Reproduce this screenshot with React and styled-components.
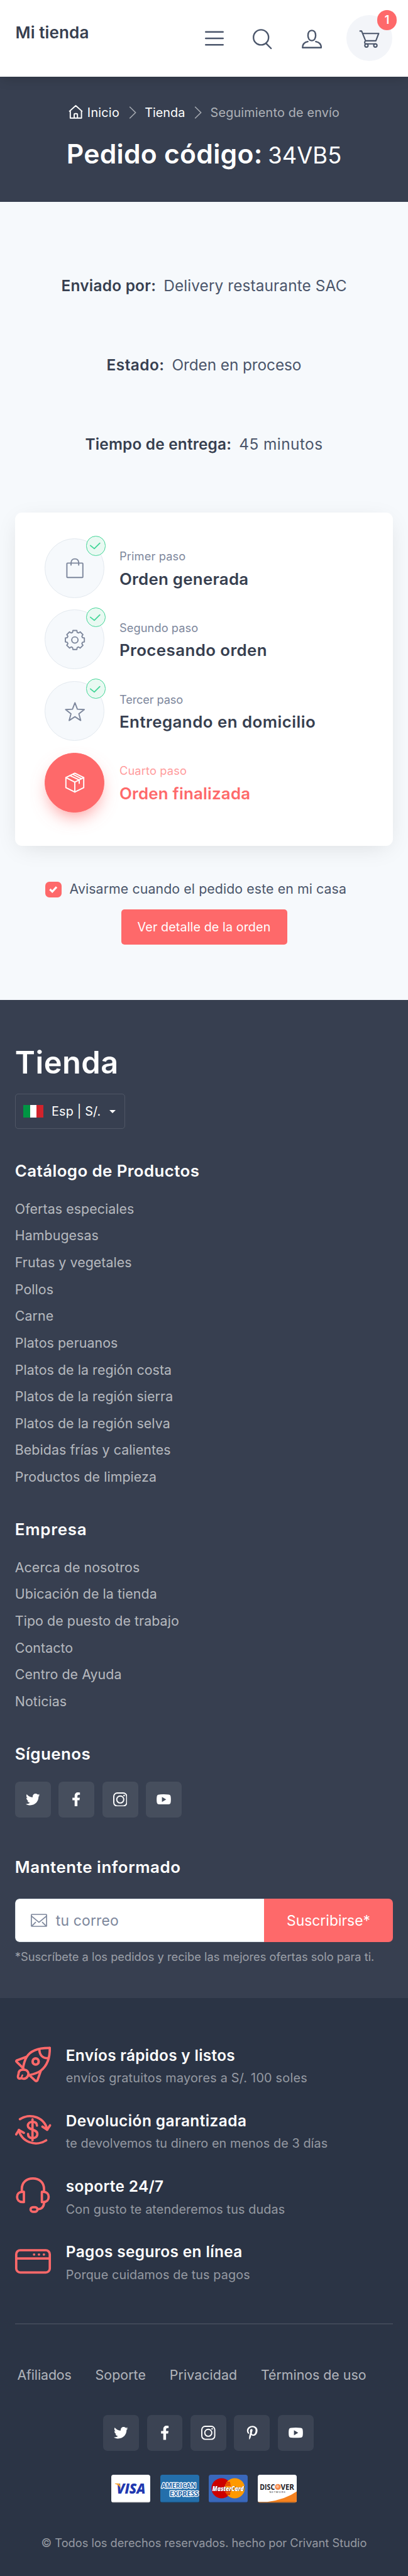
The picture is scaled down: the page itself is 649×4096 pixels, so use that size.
import React from "react";
import styled, { createGlobalStyle, css } from "styled-components";
import { FaTwitter, FaFacebookF, FaPinterestP } from "react-icons/fa";

const color = {
  primary: "#fe696a",
  dark: "#373f50",
  darker: "#2b3445",
  body: "#4b566b",
  muted: "#7d879c",
  light: "#f6f9fc",
  green: "#42d697",
};

const GlobalStyle = createGlobalStyle`
  *, *::before, *::after { box-sizing: border-box; }
  body {
    margin: 0;
    font-family: Inter, Roboto, sans-serif;
    color: ${color.body};
    background: ${color.light};
    -webkit-font-smoothing: antialiased;
  }
  svg { display: block; flex: none; }
`;

const text = css`
  font-size: ${(p) => (p.$size * 0.965).toFixed(2)}px;
  line-height: ${(p) => p.$line}px;
  letter-spacing: ${(p) => p.$track ?? 0.004}em;
  white-space: nowrap;
`;

const Page = styled.div`
  width: 649px;
  height: 4096px;
  overflow: hidden;
  display: flex;
  flex-direction: column;
`;

/* ---------- Header ---------- */

const Header = styled.header`
  height: 121.6px;
  padding: 0 25.2px 0 24.6px;
  display: flex;
  justify-content: space-between;
  background: #fff;
  position: relative;
  box-shadow: 0 5px 18px -2px rgba(0, 0, 0, 0.16);
`;

const Brand = styled.a`
  ${text}
  margin-top: 32px;
  font-weight: 600;
  color: ${color.dark};
`;

const Tools = styled.nav`
  display: flex;
  align-items: center;
`;

const Tool = styled.svg`
  width: ${(p) => p.$width}px;
  height: 40px;
  margin-right: ${(p) => p.$after}px;
  fill: none;
  stroke: ${color.body};
  stroke-width: 2.4;
  stroke-linecap: round;
  stroke-linejoin: round;
`;

const CartButton = styled.a`
  position: relative;
  width: 72.8px;
  height: 72.8px;
  border-radius: 50%;
  background: #f3f5f9;
  display: flex;
  align-items: center;
  justify-content: center;
`;

const CartCount = styled.span`
  position: absolute;
  top: -8px;
  right: -7.6px;
  width: 31.6px;
  height: 31.6px;
  border-radius: 50%;
  background: ${color.primary};
  color: #fff;
  font-size: 18px;
  font-weight: 600;
  line-height: 32px;
  text-align: center;
`;

/* ---------- Title band ---------- */

const Hero = styled.section`
  height: 199.9px;
  padding-top: 42.8px;
  display: flex;
  flex-direction: column;
  align-items: center;
  background: ${color.dark};
  color: #fff;
`;

const Breadcrumb = styled.nav`
  display: flex;
  align-items: center;
  height: 30px;
`;

const Crumb = styled.a`
  ${text}
  color: ${(p) => (p.$current ? "rgba(255,255,255,.6)" : "#fff")};
`;

const Chevron = styled.svg`
  width: 12px;
  height: 20px;
  margin: 0 13.6px 0 14.6px;
  fill: none;
  stroke: rgba(255, 255, 255, 0.55);
  stroke-width: 1.6;
`;

const HomeIcon = styled.svg`
  width: 23px;
  height: 22px;
  margin: -2px 7px 0 0;
  fill: none;
  stroke: #fff;
  stroke-width: 1.9;
  stroke-linejoin: round;
`;

const Title = styled.h1`
  margin: 23.7px 0 0;
  display: flex;
  align-items: baseline;
  gap: 8.6px;
  ${text}
  font-weight: 600;
`;

const OrderCode = styled.span`
  font-size: 36.3px;
  letter-spacing: 0.002em;
  font-weight: 400;
`;

/* ---------- Order status ---------- */

const Main = styled.main`
  height: 1268.7px;
  padding: 113.1px 23.8px 0;
  background: ${color.light};
`;

const Fact = styled.div`
  height: 126.4px;
  display: flex;
  justify-content: center;
  gap: 12px;
  ${text}
`;

const FactLabel = styled.strong`
  font-weight: 600;
  color: ${color.dark};
  letter-spacing: ${(p) => p.$track}em;
`;

const Card = styled.section`
  margin-top: 1px;
  height: 530.5px;
  padding: 41px 47.4px;
  border-radius: 11px;
  background: #fff;
  box-shadow: 0 7.6px 38px -9.5px rgba(0, 0, 0, 0.13);
`;

const Step = styled.div`
  height: 94.8px;
  margin-bottom: 18.9px;
  display: flex;
  gap: 24px;
`;

const StepMark = styled.div`
  position: relative;
  flex: none;
  width: 94.8px;
  height: 94.8px;
  border-radius: 50%;
  display: flex;
  align-items: center;
  justify-content: center;
  border: 1.6px solid ${(p) => (p.$active ? color.primary : "#e3e9ef")};
  background: ${(p) => (p.$active ? color.primary : color.light)};
  box-shadow: ${(p) => (p.$active ? "0 12.6px 28px -8px rgba(254,105,106,.75)" : "none")};
  color: ${(p) => (p.$active ? "#fff" : color.muted)};
`;

const StepIcon = styled.svg`
  width: 34px;
  height: 34px;
  fill: none;
  stroke: currentColor;
  stroke-width: 1.9;
  stroke-linejoin: round;
  stroke-linecap: round;
`;

const DoneBadge = styled.span`
  position: absolute;
  top: -4.8px;
  left: 64.6px;
  width: 31.6px;
  height: 31.6px;
  border-radius: 50%;
  border: 1.6px solid ${color.green};
  background: #e9f9f2;
  svg {
    margin: -1.6px;
    fill: none;
    stroke: ${color.green};
    stroke-width: 1.8;
    stroke-linecap: round;
    stroke-linejoin: round;
  }
`;

const StepBody = styled.div`
  padding-top: 14.4px;
  display: flex;
  flex-direction: column;
  gap: 4.5px;
`;

const StepCount = styled.span`
  ${text}
  color: ${(p) => (p.$active ? "#ff9c9d" : color.muted)};
`;

const StepTitle = styled.h2`
  margin: 0;
  ${text}
  font-weight: 600;
  color: ${(p) => (p.$active ? color.primary : color.dark)};
`;

const Notify = styled.label`
  margin: 56.8px 0 0 48.6px;
  height: 25.3px;
  display: flex;
  align-items: center;
  gap: 12.8px;
`;

const CheckBox = styled.span`
  flex: none;
  width: 25.4px;
  height: 25.4px;
  border-radius: 6.5px;
  background: ${color.primary};
  svg {
    fill: none;
    stroke: #fff;
    stroke-width: 3.2;
  }
`;

const NotifyText = styled.span`
  ${text}
  padding-bottom: 1.6px;
`;

const DetailButton = styled.button`
  display: block;
  margin: 18.6px auto 0;
  width: 264px;
  height: 55.8px;
  padding: 0;
  border: 0;
  border-radius: 5px;
  background: ${color.primary};
  color: #fff;
  font-family: inherit;
  ${text}
`;

/* ---------- Footer ---------- */

const FooterTop = styled.footer`
  height: 1586.4px;
  padding: 69.4px 23.8px 0;
  background: ${color.dark};
  color: #fff;
`;

const FooterBrand = styled.div`
  ${text}
  font-weight: 600;
`;

const Locale = styled.button`
  margin: 19.2px 0 0;
  width: 175px;
  height: 56.5px;
  padding: 0 12.6px;
  display: flex;
  align-items: center;
  border: 1.6px solid rgba(255, 255, 255, 0.12);
  border-radius: 5px;
  background: transparent;
  color: #fff;
  font-family: inherit;
`;

const LocaleText = styled.span`
  ${text}
  margin: 0 13.5px 0 12.6px;
`;

const Flag = styled.span`
  width: 32px;
  height: 20.6px;
  display: flex;
  background: linear-gradient(90deg, #009543 33.3%, #fff 33.3% 66.6%, #d2232c 66.6%);
`;

const Caret = styled.span`
  border: 5.2px solid transparent;
  border-top-color: #fff;
  border-bottom: 0;
`;

const FooterTitle = styled.h3`
  margin: ${(p) => p.$top ?? 44.1}px 0 0;
  ${text}
  font-weight: 600;
`;

const LinkList = styled.ul`
  margin: 20.9px 0 0;
  padding: 0;
  list-style: none;
`;

const LinkItem = styled.li`
  ${text}
  color: rgba(255, 255, 255, 0.65);
`;

const SocialRow = styled.div`
  display: flex;
  gap: 12.7px;
  justify-content: ${(p) => (p.$center ? "center" : "flex-start")};
  margin: ${(p) => p.$margin};
`;

const SocialButton = styled.a`
  width: 56.8px;
  height: 56.8px;
  border-radius: 7px;
  display: flex;
  align-items: center;
  justify-content: center;
  background: rgba(255, 255, 255, 0.08);
  color: #fff;
`;

const Subscribe = styled.form`
  margin-top: 32.2px;
  width: 601.4px;
  height: 69.5px;
  display: flex;
  border-radius: 7px;
  overflow: hidden;
`;

const EmailField = styled.div`
  width: 396px;
  padding-left: 24px;
  display: flex;
  align-items: center;
  gap: 14px;
  border: 1.6px solid #dae1e7;
  border-right: 0;
  border-radius: 7px 0 0 7px;
  background: #fff;
  color: ${color.muted};
  ${text}
  svg {
    fill: none;
    stroke: ${color.muted};
    stroke-width: 1.7;
    stroke-linejoin: round;
  }
`;

const SubscribeButton = styled.button`
  flex: 1;
  padding: 0;
  border: 0;
  background: ${color.primary};
  color: #fff;
  font-family: inherit;
  ${text}
`;

const Hint = styled.p`
  margin: 9px 0 0;
  ${text}
  color: rgba(255, 255, 255, 0.5);
`;

const FooterBottom = styled.footer`
  flex: 1;
  padding: 74px 23.8px 0;
  background: ${color.darker};
  color: #fff;
`;

const Perk = styled.div`
  height: 104.2px;
  display: flex;
  gap: 24px;
`;

const PerkIcon = styled.svg`
  width: 57px;
  height: 57px;
  margin-top: 3.4px;
  overflow: visible;
  fill: none;
  stroke: ${color.primary};
  stroke-width: 3.7;
  stroke-linecap: round;
  stroke-linejoin: round;
`;

const PerkTitle = styled.h4`
  margin: 0 0 4.6px;
  ${text}
  font-weight: 600;
`;

const PerkText = styled.div`
  ${text}
  color: rgba(255, 255, 255, 0.5);
`;

const Rule = styled.hr`
  margin: 27px 0 0;
  border: 0;
  height: 1.6px;
  background: rgba(255, 255, 255, 0.1);
`;

const PolicyLinks = styled.nav`
  margin: 64px 0 0 3.6px;
  display: flex;
  gap: 37.8px;
`;

const PolicyLink = styled.a`
  ${text}
  color: rgba(255, 255, 255, 0.65);
`;

const Payments = styled.div`
  margin-top: 38px;
  display: flex;
  justify-content: center;
  gap: 15.8px;
`;

const PaymentCard = styled.svg`
  width: 62px;
  height: 44.4px;
  overflow: visible;
`;

const Copyright = styled.div`
  margin-top: 50px;
  text-align: center;
  ${text}
  color: rgba(255, 255, 255, 0.5);
`;

/* ---------- Drawings ---------- */

const polar = (cx, cy, r, a) =>
  `${(cx + r * Math.sin(a)).toFixed(2)} ${(cy - r * Math.cos(a)).toFixed(2)}`;

const starPoints = Array.from({ length: 10 }, (_, i) =>
  polar(17.2, 19, i % 2 ? 6.6 : 15.6, (i * Math.PI) / 5)
).join(" ");

const gearPoints = Array.from({ length: 8 }, (_, i) => {
  const a = (i * Math.PI) / 4;
  return [
    [12.6, -0.3],
    [15.4, -0.2],
    [15.4, 0.2],
    [12.6, 0.3],
  ]
    .map(([r, d]) => polar(17.1, 17.6, r, a + d))
    .join(" ");
}).join(" ");

const stepIcons = {
  bag: (
    <>
      <rect x="4.4" y="9.4" width="25.4" height="22.8" rx="1" />
      <path d="M11 12.6V9.5C11 4.8 13.4 2.6 17.1 2.6S23.2 4.8 23.2 9.5V12.6" />
    </>
  ),
  gear: (
    <>
      <polygon points={gearPoints} />
      <circle cx="17.1" cy="17.6" r="5" />
    </>
  ),
  star: <polygon points={starPoints} />,
  box: (
    <>
      <path d="M17 2.4L31.2 9.4V25.4L17 32.4L2.8 25.4V9.4Z" />
      <path d="M2.8 9.4L17 16.6L31.2 9.4M17 16.6V32.4" />
      <path d="M9.2 6.2L24 13.2V18.6M13.6 4.2L27.6 11.2" />
    </>
  ),
};

const perkIcons = {
  rocket: (
    <>
      <path d="M55.2 2.3C38 2 24.5 6 18.2 17C15.5 21.5 14 27 12.8 33.5" />
      <path d="M55.2 2.3C55.5 19 50.5 31 41 38.4C36 42.4 29 44.2 22.5 45.5" />
      <path d="M38.6 4C38.5 14 44 19 53 18.6" />
      <circle cx="32.7" cy="23.9" r="4.8" strokeWidth="4" />
      <path d="M18 16.4L2.4 22.2Q1.4 23.2 2.4 24.3L13 34.6M40.6 39.6L35.4 54.2Q34 55.6 32.4 54.6L22 45.1" />
      <path d="M13 36.9C20 36.9 23 42 20 47.5C18 51 14 52 9.6 50.6C5 52.2 3.4 49.6 5.4 44C5.4 39 8.5 36.9 13 36.9Z" />
      <path d="M11.6 45.8L10 49.5" strokeWidth="2.6" />
    </>
  ),
  refund: (
    <>
      <path d="M7.6 11.6A27.5 25 0 0 1 51 28.4" />
      <path d="M43.4 23.4L51 28.4L55.6 21.4" />
      <path d="M6 28.7A27.5 25 0 0 0 49.5 45.2" />
      <path d="M1.8 35.8L6 28.9L14 33.4" />
      <path d="M27.7 11.8V45.2" />
      <path d="M34.8 21.8C34.8 17.6 31.8 15.8 27.7 15.8S20.3 18 20.3 22C20.3 29.4 35.4 27 35.4 35C35.4 39.5 32 41.7 27.7 41.7S20.6 39.4 20.6 35" />
    </>
  ),
  headset: (
    <>
      <path d="M10.7 21.5V18.6C10.7 8.5 18 1.9 28.3 1.9S46 8.5 46 18.6V21.5" />
      <path d="M14 23.2V39.4H11.6C6.4 39.4 3.2 36.2 3.2 31.3S6.4 23.2 11.6 23.2Z" />
      <path d="M42.6 23.2V39.4H45C50.2 39.4 53.4 36.2 53.4 31.3S50.2 23.2 45 23.2Z" />
      <path d="M46 41C45.6 47 42 50.6 36 50.8" />
      <rect x="24.6" y="47.6" width="11" height="7.2" rx="3.6" />
    </>
  ),
  browser: (
    <>
      <rect x="1.8" y="11" width="53.4" height="35.4" rx="6.4" />
      <path d="M2 24.2H55" strokeLinecap="butt" />
      <g fill={color.primary} stroke="none">
        <circle cx="30.2" cy="17.8" r="1.9" />
        <circle cx="38" cy="17.8" r="1.9" />
        <circle cx="45.8" cy="17.8" r="1.9" />
      </g>
    </>
  ),
};

const Instagram = () => (
  <svg width="22.6" height="22.6" viewBox="0 0 22.6 22.6" fill="none" stroke="#fff" strokeWidth="1.9">
    <rect x="1" y="1" width="20.6" height="20.6" rx="5.4" />
    <circle cx="11.3" cy="11.3" r="5.6" />
    <circle cx="17.4" cy="5" r="1.3" fill="#fff" stroke="none" />
  </svg>
);

const YouTube = () => (
  <svg width="23" height="16.4" viewBox="0 0 23 16.4" fill="#fff">
    <path
      fillRule="evenodd"
      d="M4 .4Q11.5-.3 19 .4Q22 .6 22.5 3.4Q23.2 8.2 22.5 13Q22 15.8 19 16Q11.5 16.7 4 16Q1 15.8.5 13Q-.2 8.2.5 3.4Q1 .6 4 .4ZM8.6 4.2V12.2L15.4 8.2Z"
    />
  </svg>
);

const socialIcons = {
  twitter: <FaTwitter size={22.6} />,
  facebook: <FaFacebookF size={22.4} />,
  instagram: <Instagram />,
  pinterest: <FaPinterestP size={22.4} />,
  youtube: <YouTube />,
};

const CardFace = ({ fill, label, art, children }) => (
  <PaymentCard viewBox="0 0 62 44.4" role="img" aria-label={label}>
    <clipPath id={`clip-${label}`}>
      <rect width="62" height="44.4" rx="3.6" />
    </clipPath>
    <g clipPath={`url(#clip-${label})`}>
      <rect width="62" height="44.4" fill={fill} />
      {art}
      <rect y="43" width="62" height="1.4" fill="#000" opacity=".25" />
    </g>
    {children}
  </PaymentCard>
);

const Lettering = styled.text`
  font-family: "Open Sans", sans-serif;
  font-weight: ${(p) => p.$weight ?? 800};
  font-style: ${(p) => (p.$italic ? "italic" : "normal")};
  font-size: ${(p) => p.$size}px;
  text-shadow: ${(p) => (p.$shadow ? "0.8px 0.8px 0 #1d2a66" : "none")};
`;

const Visa = () => (
  <CardFace fill="#fff" label="visa">
    <Lettering $italic $size={22.4} x="8.5" y="29.6" textLength="46" lengthAdjust="spacingAndGlyphs" fill="#2138b0">
      VISA
    </Lettering>
    <path d="M5.8 13.8H11.4Q13.4 13.8 13.8 15.4L15 22Q12.2 15.8 5.8 14.4Z" fill="#f7a430" />
  </CardFace>
);

const Amex = () => (
  <CardFace fill="#246fab" label="amex">
    <g fill="#1c64a8" stroke="#fff" strokeWidth="2.4" paintOrder="stroke" strokeLinejoin="round">
      <Lettering $weight={700} $size={10.8} x="1.8" y="21.2" textLength="55" lengthAdjust="spacingAndGlyphs">AMERICAN</Lettering>
      <Lettering $weight={700} $size={10.8} x="14.8" y="33.8" textLength="46" lengthAdjust="spacingAndGlyphs">EXPRESS</Lettering>
    </g>
  </CardFace>
);

const MasterCard = () => (
  <CardFace
    fill="#3a68bb"
    label="mastercard"
    art={
      <>
        <circle cx="20.4" cy="21.4" r="16" fill="#cc0000" />
        <circle cx="41.4" cy="21.4" r="16" fill="#ff9900" />
        <path
          d="M28.5 12.2H34M27 14.6H34.4M26.2 17H35M26 26.4H35M27 28.8H34.4M28.5 31.2H34"
          stroke="#cc0000"
          strokeWidth="1.2"
        />
      </>
    }
  >
    <Lettering $italic $shadow $size={11} x="5.8" y="25.7" textLength="50" lengthAdjust="spacingAndGlyphs" fill="#fff">
      MasterCard
    </Lettering>
  </CardFace>
);

const Discover = () => (
  <CardFace
    fill="#fff"
    label="discover"
    art={<path d="M62 26.6Q44 39.6 15 43.2H0V44.4H62Z" fill="#f58220" />}
  >
    <g fill="#1c2126">
      <Lettering $weight={700} $size={12.4} x="3.2" y="23.8" textLength="24" lengthAdjust="spacingAndGlyphs">DISC</Lettering>
      <Lettering $weight={700} $size={12.4} x="36.4" y="23.8" textLength="21.6" lengthAdjust="spacingAndGlyphs">VER</Lettering>
      <Lettering $weight={400} $size={4.2} x="18.4" y="29.4" textLength="25.4" lengthAdjust="spacing">NETWORK</Lettering>
    </g>
    <circle cx="32" cy="19.4" r="4.7" fill="#f5894a" />
    <circle cx="31.4" cy="18.8" r="2.2" fill="#fbc09a" />
  </CardFace>
);

/* ---------- Data ---------- */

const facts = [
  { label: "Enviado por:", value: "Delivery restaurante SAC", labelTrack: 0.01, track: 0.004 },
  { label: "Estado:", value: "Orden en proceso", labelTrack: 0.018, track: -0.004 },
  { label: "Tiempo de entrega:", value: "45 minutos", labelTrack: 0.007, track: 0.018 },
];

const steps = [
  { count: "Primer paso", title: "Orden generada", icon: "bag", track: 0.01, countTrack: 0.0075 },
  { count: "Segundo paso", title: "Procesando orden", icon: "gear", track: 0.016, countTrack: 0.004 },
  { count: "Tercer paso", title: "Entregando en domicilio", icon: "star", track: 0.018, countTrack: -0.008 },
  { count: "Cuarto paso", title: "Orden finalizada", icon: "box", track: 0.008, countTrack: 0.0076, active: true },
];

const catalog = [
  "Ofertas especiales",
  "Hambugesas",
  "Frutas y vegetales",
  "Pollos",
  "Carne",
  "Platos peruanos",
  "Platos de la región costa",
  "Platos de la región sierra",
  "Platos de la región selva",
  "Bebidas frías y calientes",
  "Productos de limpieza",
];

const company = [
  "Acerca de nosotros",
  "Ubicación de la tienda",
  "Tipo de puesto de trabajo",
  "Contacto",
  "Centro de Ayuda",
  "Noticias",
];

const perks = [
  { icon: "rocket", title: "Envíos rápidos y listos", text: "envíos gratuitos mayores a S/. 100 soles", titleTrack: 0.012, track: 0.0125 },
  { icon: "refund", title: "Devolución garantizada", text: "te devolvemos tu dinero en menos de 3 días", titleTrack: 0.018, track: 0.005 },
  { icon: "headset", title: "soporte 24/7", text: "Con gusto te atenderemos tus dudas", titleTrack: 0.013, track: 0.006 },
  { icon: "browser", title: "Pagos seguros en línea", text: "Porque cuidamos de tus pagos", titleTrack: 0.015, track: 0.006 },
];

const Social = ({ items, ...rest }) => (
  <SocialRow {...rest}>
    {items.map((name) => (
      <SocialButton key={name} aria-label={name}>
        {socialIcons[name]}
      </SocialButton>
    ))}
  </SocialRow>
);

const Links = ({ items }) => (
  <LinkList>
    {items.map((item) => (
      <LinkItem key={item} $size={22.1} $line={42.63}>
        {item}
      </LinkItem>
    ))}
  </LinkList>
);

const Separator = () => (
  <Chevron viewBox="0 0 12 20">
    <path d="M1.2 .8L10.6 10L1.2 19.2" />
  </Chevron>
);

export default function App() {
  return (
    <Page>
      <GlobalStyle />
      <Header>
        <Brand $size={27} $line={40} $track={0.004}>Mi tienda</Brand>
        <Tools>
          <Tool viewBox="0 0 30 40" $width={30} $after={45}>
            <path d="M1.3 9.8H28.7M1.3 20H28.7M1.3 30.2H28.7" strokeWidth="2.6" />
          </Tool>
          <Tool viewBox="0 0 32 40" $width={32} $after={47}>
            <circle cx="14.2" cy="18.4" r="12" />
            <path d="M22.6 28.4L30.2 36" />
          </Tool>
          <Tool viewBox="0 0 32 40" $width={32} $after={39.2}>
            <path d="M16 7.4C20 7.4 22.3 10.6 22.1 15.6C21.9 20.4 19.4 23.6 16 23.6S10.1 20.4 9.9 15.6C9.7 10.6 12 7.4 16 7.4Z" />
            <path d="M9.6 25.1C4 26.2 1.3 29.8 1.3 34.7H30.9C30.9 29.8 28 26.2 22.4 25.1" />
          </Tool>
          <CartButton aria-label="Carrito">
            <Tool viewBox="0 0 33 40" $width={33} $after={0}>
              <path d="M1.7 8.4H4.2L10.5 23.9H26.9L31.4 12.2H6.2M10.5 23.9C8.4 25.4 8.6 28.5 10.9 28.7H26.8" strokeWidth="2.1" />
              <circle cx="11.9" cy="31.3" r="2.6" strokeWidth="2.1" />
              <circle cx="26.1" cy="31.3" r="2.6" strokeWidth="2.1" />
            </Tool>
            <CartCount>1</CartCount>
          </CartButton>
        </Tools>
      </Header>

      <Hero>
        <Breadcrumb>
          <HomeIcon viewBox="0 0 23 22">
            <path d="M1 10.4L11.5 1L22 10.4M2.8 9V20.8H20.6V9M9 20.8V15.2Q9 13.8 10.4 13.8H12.8Q14.2 13.8 14.2 15.2V20.8" />
          </HomeIcon>
          <Crumb $size={20.5} $line={30} $track={0.012}>Inicio</Crumb>
          <Separator />
          <Crumb $size={20.5} $line={30} $track={0.002}>Tienda</Crumb>
          <Separator />
          <Crumb $current $size={20.5} $line={30} $track={0.01}>Seguimiento de envío</Crumb>
        </Breadcrumb>
        <Title $size={44.2} $line={54} $track={0.006}>
          Pedido código: <OrderCode>34VB5</OrderCode>
        </Title>
      </Hero>

      <Main>
        {facts.map((f) => (
          <Fact key={f.label} $size={25.3} $line={38} $track={f.track}>
            <FactLabel $track={f.labelTrack}>{f.label}</FactLabel>
            <span>{f.value}</span>
          </Fact>
        ))}
        <Card>
          {steps.map((s) => (
            <Step key={s.count}>
              <StepMark $active={s.active}>
                <StepIcon viewBox="0 0 34 34">{stepIcons[s.icon]}</StepIcon>
                {!s.active && (
                  <DoneBadge>
                    <svg width="31.6" height="31.6" viewBox="0 0 31.6 31.6">
                      <path d="M7.8 16.4L14 21.4L22.8 12.6" />
                    </svg>
                  </DoneBadge>
                )}
              </StepMark>
              <StepBody>
                <StepCount $active={s.active} $size={18.9} $line={28} $track={s.countTrack}>{s.count}</StepCount>
                <StepTitle $active={s.active} $size={26.8} $line={36} $track={s.track}>{s.title}</StepTitle>
              </StepBody>
            </Step>
          ))}
        </Card>
        <Notify>
          <CheckBox>
            <svg width="25.4" height="25.4" viewBox="0 0 25.4 25.4">
              <path d="M7.4 12L11.2 15.8L18 8.4" />
            </svg>
          </CheckBox>
          <NotifyText $size={22.1} $line={25}>Avisarme cuando el pedido este en mi casa</NotifyText>
        </Notify>
        <DetailButton $size={20.5} $line={30} $track={0.004}>Ver detalle de la orden</DetailButton>
      </Main>

      <FooterTop>
        <FooterBrand $size={50.5} $line={60} $track={0.01}>Tienda</FooterBrand>
        <Locale>
          <Flag />
          <LocaleText $size={20.5} $line={30} $track={0.009}>Esp | S/.</LocaleText>
          <Caret />
        </Locale>
        <FooterTitle $top={48.7} $size={26.8} $line={36} $track={0.016}>Catálogo de Productos</FooterTitle>
        <Links items={catalog} />
        <FooterTitle $size={26.8} $line={36} $track={0.03}>Empresa</FooterTitle>
        <Links items={company} />
        <FooterTitle $size={26.8} $line={36} $track={0.018}>Síguenos</FooterTitle>
        <Social items={["twitter", "facebook", "instagram", "youtube"]} $margin="26.2px 0 0" />
        <FooterTitle $top={61.2} $size={26.8} $line={36} $track={0.022}>Mantente informado</FooterTitle>
        <Subscribe>
          <EmailField $size={23.7} $line={34} $track={0.008}>
            <svg width="26" height="21" viewBox="0 0 26 21">
              <rect x=".9" y="1" width="24.2" height="19" rx=".8" />
              <path d="M1 3.6L13 13.6L25 3.6M1.8 19.4L8 13.2M24.2 19.4L18 13.2" />
            </svg>
            tu correo
          </EmailField>
          <SubscribeButton type="button" $size={23.7} $line={34} $track={0.001}>Suscribirse*</SubscribeButton>
        </Subscribe>
        <Hint $size={18.9} $line={28} $track={0.001}>
          *Suscríbete a los pedidos y recibe las mejores ofertas solo para ti.
        </Hint>
      </FooterTop>

      <FooterBottom>
        {perks.map((p) => (
          <Perk key={p.icon}>
            <PerkIcon viewBox="0 0 57 57">{perkIcons[p.icon]}</PerkIcon>
            <div>
              <PerkTitle $size={25.3} $line={34} $track={p.titleTrack}>{p.title}</PerkTitle>
              <PerkText $size={20.5} $line={30} $track={p.track}>{p.text}</PerkText>
            </div>
          </Perk>
        ))}
        <Rule />
        <PolicyLinks>
          <PolicyLink $size={22.1} $line={32} $track={-0.0046}>Afiliados</PolicyLink>
          <PolicyLink $size={22.1} $line={32}>Soporte</PolicyLink>
          <PolicyLink $size={22.1} $line={32}>Privacidad</PolicyLink>
          <PolicyLink $size={22.1} $line={32} $track={0}>Términos de uso</PolicyLink>
        </PolicyLinks>
        <Social
          $center
          $margin="48px 0 0 13.8px"
          items={["twitter", "facebook", "instagram", "pinterest", "youtube"]}
        />
        <Payments>
          <Visa />
          <Amex />
          <MasterCard />
          <Discover />
        </Payments>
        <Copyright $size={18.9} $line={28} $track={0}>
          © Todos los derechos reservados. hecho por Crivant Studio
        </Copyright>
      </FooterBottom>
    </Page>
  );
}
